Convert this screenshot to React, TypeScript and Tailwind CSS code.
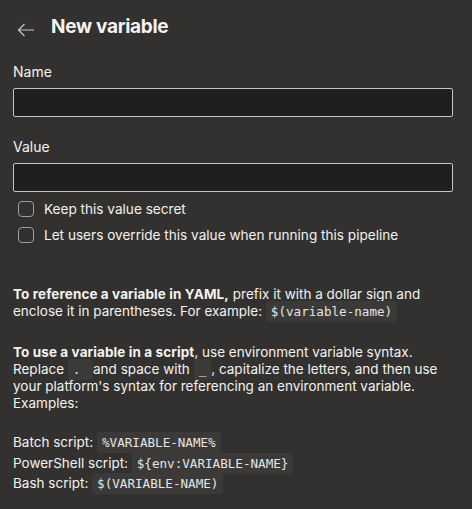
import React from 'react'

const mono = "font-['DejaVu_Sans_Mono',monospace]"

function Code({ children }: { children: React.ReactNode }) {
  return (
    <code className={`${mono} text-[12.6px] leading-none bg-[#3b3a39] rounded-[3px] px-[5px] py-[3px] text-[#e5e5e5]`}>
      {children}
    </code>
  )
}

function Check({ label }: { label: string }) {
  return (
    <label className="flex items-center h-[26px]">
      <span className="ml-[5px] w-[16px] h-[16px] rounded-[4px] border border-[#a19f9d]" />
      <span className="ml-[10px] text-[13.6px] text-[#f3f2f1]">{label}</span>
    </label>
  )
}

export default function App() {
  return (
    <div className="w-[472px] h-[509px] bg-[#323130] text-[#f3f2f1] font-['Inter',sans-serif] pl-[13px] pr-[19px] overflow-hidden">
      <div className="flex items-center h-[52px] pt-[2px]">
        <svg width="18" height="14" viewBox="0 0 18 14" className="ml-[4px] mt-[6px]" fill="none" stroke="#c8c6c4" strokeWidth="1.2">
          <path d="M17 7H1.5M7.5 1L1.5 7l6 6" />
        </svg>
        <h1 className="ml-[16px] text-[19px] font-bold tracking-[-0.3px]">New variable</h1>
      </div>

      <div className="mt-[10px] text-[14px] leading-[20px]">Name</div>
      <input className="mt-[6px] block w-full h-[29px] bg-[#201f1e] border border-[#c8c6c4] rounded-[2px] outline-none" />

      <div className="mt-[20px] text-[14px] leading-[20px]">Value</div>
      <input className="mt-[6px] block w-full h-[29px] bg-[#201f1e] border border-[#c8c6c4] rounded-[2px] outline-none" />

      <div className="mt-[4px]">
        <Check label="Keep this value secret" />
        <Check label="Let users override this value when running this pipeline" />
      </div>

      <div className="mt-[38px] text-[13.5px] leading-[17px]">
        <p>
          <b className="font-bold tracking-[0.1px]">To reference a variable in YAML,</b> prefix it with a dollar sign and
          enclose it in parentheses. For example: <Code>$(variable-name)</Code>
        </p>
        <p className="mt-[24px]">
          <b className="font-bold tracking-[0.1px]">To use a variable in a script</b>, use environment variable syntax.
          Replace <Code> . </Code> and space with <Code>_</Code>, capitalize the letters, and then use
          your platform's syntax for referencing an environment variable. Examples:
        </p>
        <div className="mt-[20px] leading-[20.5px]">
          <div>Batch script: <Code>%VARIABLE-NAME%</Code></div>
          <div>PowerShell script: <Code>{'${env:VARIABLE-NAME}'}</Code></div>
          <div>Bash script: <Code>$(VARIABLE-NAME)</Code></div>
        </div>
      </div>
    </div>
  )
}
